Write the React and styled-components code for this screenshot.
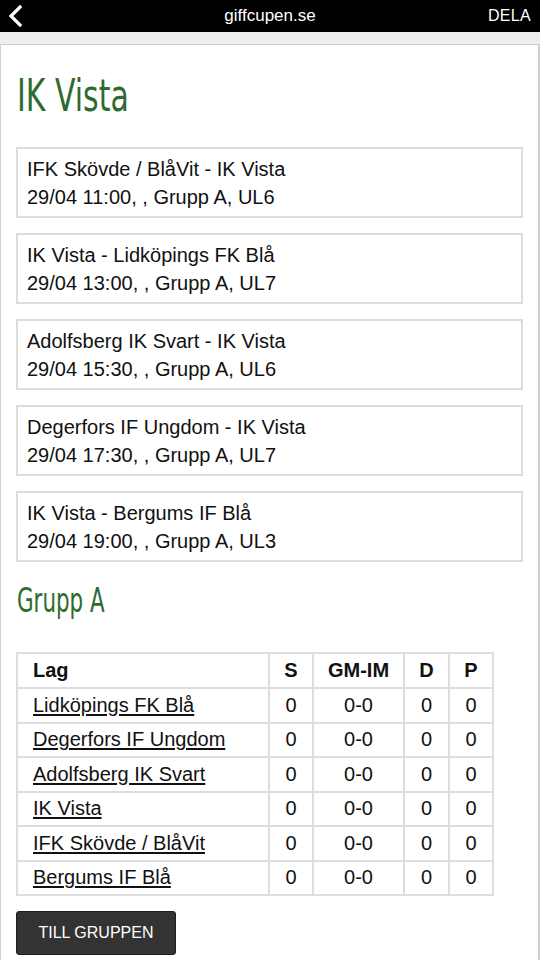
import styled, { createGlobalStyle } from "styled-components";

const GlobalStyle = createGlobalStyle`
  html, body {
    margin: 0;
    padding: 0;
    background: #eeeeee;
  }
  body {
    font-family: "Liberation Sans", Arial, sans-serif;
    color: #111;
  }
`;

const TopBar = styled.div`
  height: 32px;
  background: #000;
  color: #fff;
  display: flex;
  align-items: center;
  justify-content: space-between;
  padding: 0 9px 0 8px;
  position: relative;
`;

const BarTitle = styled.div`
  position: absolute;
  left: 0;
  right: 0;
  text-align: center;
  font-size: 17px;
  pointer-events: none;
`;

const Share = styled.div`
  font-size: 16px;
  letter-spacing: 0.3px;
`;

const Strip = styled.div`
  height: 12px;
  background: #eeeeee;
`;

const Card = styled.div`
  background: #fff;
  border: 1px solid #cfcfcf;
  border-right-width: 2px;
  border-bottom-width: 2px;
  padding: 23px 15px 6px 15px;
  min-height: 914px;
  box-sizing: border-box;
`;

const Heading = styled.h1`
  margin: 0 0 23px 1px;
  font-family: "DejaVu Sans Condensed", "Liberation Sans Narrow", sans-serif;
  font-weight: 400;
  font-size: 45px;
  line-height: 56px;
  color: #2f6a2f;
  transform: scaleX(0.74);
  transform-origin: left center;
`;

const SubHeading = styled.h2`
  margin: 1px 0 32px 1px;
  font-family: "DejaVu Sans Condensed", "Liberation Sans Narrow", sans-serif;
  font-weight: 400;
  font-size: 34px;
  line-height: 40px;
  color: #2f6a2f;
  transform: scaleX(0.7);
  transform-origin: left center;
`;

const MatchList = styled.div`
  display: flex;
  flex-direction: column;
  gap: 15px;
  margin-bottom: 18px;
`;

const Match = styled.div`
  border: 2px solid #dcdcdc;
  padding: 6px 9px 5px 9px;
  font-size: 20px;
  line-height: 28px;
  color: #111;
`;

const Table = styled.table`
  border-collapse: collapse;
  table-layout: fixed;
  width: 478px;
  font-size: 20px;
  margin-bottom: 15px;
`;

const Th = styled.th`
  border: 2px solid #dddddd;
  height: 33px;
  padding: 0;
  font-weight: 700;
  text-align: ${(p) => p.$align || "center"};
  padding-left: ${(p) => (p.$align ? "15px" : "0")};
  width: ${(p) => p.$w || "auto"};
  white-space: nowrap;
`;

const Td = styled.td`
  border: 2px solid #dddddd;
  height: 32.5px;
  padding: 0;
  padding-left: ${(p) => (p.$align ? "15px" : "0")};
  text-align: ${(p) => p.$align || "center"};
  white-space: nowrap;
`;

const TeamLink = styled.a`
  color: #111;
  text-decoration: underline;
  text-underline-offset: 2px;
`;

const Button = styled.button`
  background: #333333;
  color: #fff;
  border: 1px solid #1e1e1e;
  border-radius: 3px;
  font-family: "Liberation Sans", Arial, sans-serif;
  font-size: 16px;
  padding: 0;
  height: 44px;
  width: 160px;
  text-transform: uppercase;
`;

const matches = [
  ["IFK Skövde / BlåVit - IK Vista", "29/04 11:00, , Grupp A, UL6"],
  ["IK Vista - Lidköpings FK Blå", "29/04 13:00, , Grupp A, UL7"],
  ["Adolfsberg IK Svart - IK Vista", "29/04 15:30, , Grupp A, UL6"],
  ["Degerfors IF Ungdom - IK Vista", "29/04 17:30, , Grupp A, UL7"],
  ["IK Vista - Bergums IF Blå", "29/04 19:00, , Grupp A, UL3"],
];

const teams = [
  "Lidköpings FK Blå",
  "Degerfors IF Ungdom",
  "Adolfsberg IK Svart",
  "IK Vista",
  "IFK Skövde / BlåVit",
  "Bergums IF Blå",
];

function App() {
  return (
    <>
      <GlobalStyle />
      <TopBar>
        <svg width="16" height="22" viewBox="0 0 16 22">
          <path d="M12 2 L3 11 L12 20" fill="none" stroke="#fff" strokeWidth="3.2" strokeLinecap="square" />
        </svg>
        <BarTitle>giffcupen.se</BarTitle>
        <Share>DELA</Share>
      </TopBar>
      <Strip />
      <Card>
        <Heading>IK Vista</Heading>
        <MatchList>
          {matches.map(([title, info]) => (
            <Match key={title}>
              <div>{title}</div>
              <div>{info}</div>
            </Match>
          ))}
        </MatchList>
        <SubHeading>Grupp A</SubHeading>
        <Table>
          <thead>
            <tr>
              <Th $align="left">Lag</Th>
              <Th $w="42px">S</Th>
              <Th $w="89px">GM-IM</Th>
              <Th $w="43px">D</Th>
              <Th $w="42px">P</Th>
            </tr>
          </thead>
          <tbody>
            {teams.map((t) => (
              <tr key={t}>
                <Td $align="left">
                  <TeamLink href="#">{t}</TeamLink>
                </Td>
                <Td>0</Td>
                <Td>0-0</Td>
                <Td>0</Td>
                <Td>0</Td>
              </tr>
            ))}
          </tbody>
        </Table>
        <Button>Till gruppen</Button>
      </Card>
    </>
  );
}

export default App;
